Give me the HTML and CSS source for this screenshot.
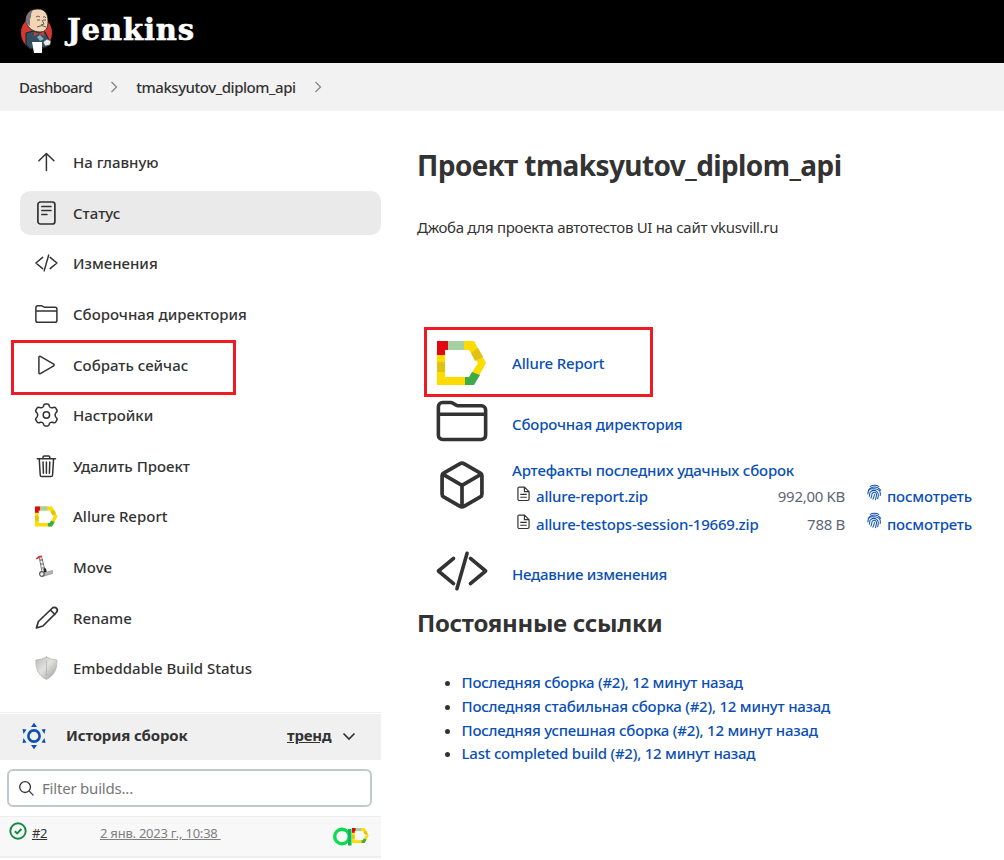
FILE: index.html
```html
<!DOCTYPE html>
<html lang="ru">
<head>
<meta charset="utf-8">
<title>tmaksyutov_diplom_api [Jenkins]</title>
<link rel="stylesheet" href="styles.css">
</head>
<body>
<svg class="defs" width="0" height="0">
  <defs>
    <linearGradient id="steel" x1="0" x2="1" y1="0" y2="1">
      <stop offset="0" stop-color="#b9bbb8"/><stop offset=".45" stop-color="#e2e3e0"/><stop offset="1" stop-color="#979995"/>
    </linearGradient>
    <symbol id="folder" viewBox="0 0 512 512"><path d="M440 432H72a40 40 0 01-40-40V120a40 40 0 0140-40h75.890a40 40 0 0122.190 6.720l27.840 18.560a40 40 0 0022.190 6.720H440a40 40 0 0140 40v240a40 40 0 01-40 40zM32 192h448"/></symbol>
    <symbol id="code" viewBox="0 0 512 512"><path d="M176 376 32 256l144-120M336 376l144-120-144-120M304 88l-96 336"/></symbol>
    <symbol id="allure" viewBox="0 0 50 44">
      <path fill="#ffdc00" d="M0 0H37L49 22 37 44H0ZM8 9V36H32L41 22 32 9Z" fill-rule="evenodd"/>
      <path fill="#e30613" d="M0 0H11V9H8V14H0Z"/><path fill="#a5d1a2" d="M11 0H27V9H11Z"/>
      <path fill="#e0c212" d="M0 21H8V31H0ZM41 7 46 16 38 20 34 12Z"/>
      <path fill="#3dab49" d="M28 36H32L35 31 43 34 37 44H28Z"/>
    </symbol>
    <symbol id="doc" viewBox="0 0 14 17"><path d="M1 2.500Q1 1 2.500 1H8L13 6V14Q13 15.500 11.500 15.500H2.500Q1 15.500 1 14ZM8 1V6H13M3.500 9H10.500M3.500 12H10.500"/></symbol>
    <symbol id="finger" viewBox="0 0 16 18"><path d="M3 2.200Q8-.8 13 2.200M1.200 6.500Q4 2.700 8 2.700T14.800 6.500M1 10.500C.5 3 7 4.500 8 4.500 13 4.700 15 7.500 14 12M2.300 13C3.500 10 2 9 4 7.600 8 4.300 13 7.500 11.900 12.500L11.300 15.500M4 14.800C6 11.500 4.500 11 5.600 9.300 8 6.800 10.700 9 10 12L9 16.500M6 16C8 13 7.500 12 8 10.300"/></symbol>
  </defs>
</svg>

<header class="header">
  <svg class="butler" viewBox="0 0 34 46">
    <ellipse cx="16.500" cy="25" rx="15.500" ry="16.500" fill="#d33833"/>
    <path d="M6 25 13 23 25 24 29 32 27 39 10 41 6 36Z" fill="#335061" stroke="#17212a"/>
    <path d="M6 14C5 5 11 1 18 1 25 1 28 6 28 13 28 20 26 24 20 24 13 24 8 20 6 14Z" fill="#f0d6b7" stroke="#222" stroke-width=".8"/>
    <path d="M6 15C5 8 8 4 13 2 10 6 12 9 10 11L10 18Z" fill="#7b757b"/>
    <path d="M16 9Q18 7 20 9M23 9Q25 8 26 10M17 12h3M23 12h3M22 12l2 4-3 1M17 19q5-3 9 0" fill="none" stroke="#493728" stroke-width=".8"/>
    <path d="M14 24 19 26 24 23V28L19 26 14 28Z" fill="#d33833"/>
    <path d="M17 29 20 27 24 31 20 33Z" fill="#81b0c4"/>
    <path d="M12 34H22V45H14Z" fill="#fff"/>
    <path d="M23 34 27 31 31 33 30 37 25 38Z" fill="#e9ebeb" stroke="#444" stroke-width=".7"/>
  </svg>
  <span class="brand">Jenkins</span>
</header>

<nav class="crumbs">
  <a class="crumb-root">Dashboard</a>
  <svg class="chev" viewBox="0 0 8 12"><path d="M1.500 1 6.500 6 1.500 11"/></svg>
  <a class="crumb-job">tmaksyutov_diplom_api</a>
  <svg class="chev" viewBox="0 0 8 12"><path d="M1.500 1 6.500 6 1.500 11"/></svg>
</nav>

<div class="page">
  <aside class="side">
    <div class="tasks">
      <a class="task"><svg class="ic" viewBox="0 0 512 512"><path d="M96 230 256 76l160 154M256 80v356"/></svg><span>На главную</span></a>
      <a class="task active"><svg class="ic" viewBox="0 0 24 24"><g class="px"><rect x="3.500" y="1" width="17" height="22" rx="2.500"/><path d="M7.500 5.500h9M7.500 9.500h9M7.500 13.500h5"/></g></svg><span>Статус</span></a>
      <a class="task"><svg class="ic"><use href="#code"/></svg><span>Изменения</span></a>
      <a class="task"><svg class="ic"><use href="#folder"/></svg><span>Сборочная директория</span></a>
      <a class="task marked"><svg class="ic" viewBox="0 0 512 512"><path d="M96 90v332c0 18 17 27 31 19l285-168c12-7 12-27 0-34L127 71c-14-8-31 1-31 19z"/></svg><span>Собрать сейчас</span></a>
      <a class="task"><svg class="ic" viewBox="0 0 24 24"><path class="thin" d="M9 3.500Q9.300 1 11 1H13Q14.700 1 15 3.500 16 5.300 18 4.700 20.500 3.500 21.400 5.200L22.500 7Q23.300 8.600 21.300 10 20 12 21.300 14 23.300 15.400 22.500 17L21.400 18.800Q20.500 20.500 18 19.300 16 18.700 15 20.500 14.700 23 13 23H11Q9.300 23 9 20.500 8 18.700 6 19.300 3.500 20.500 2.600 18.800L1.500 17Q.7 15.400 2.700 14 4 12 2.700 10 .7 8.600 1.500 7L2.600 5.200Q3.500 3.500 6 4.700 8 5.300 9 3.500Z"/><circle class="thin" cx="12" cy="12" r="3.200"/></svg><span>Настройки</span></a>
      <a class="task"><svg class="ic" viewBox="0 0 512 512"><path d="M104 112l20 336c1 20 14 34 32 34h200c18 0 31-14 32-34l20-336M62 100h388M184 100V64a24 24 0 0124-24h96a24 24 0 0124 24v36M256 170v240M184 170l8 240M328 170l-8 240"/></svg><span>Удалить Проект</span></a>
      <a class="task"><svg class="allure-s"><use href="#allure"/></svg><span>Allure Report</span></a>
      <a class="task"><svg class="ic truck" viewBox="0 0 24 24"><path d="M5 3 8 19M7.500 3 11 17" stroke="#777" stroke-width="1"/><path d="M6 5h2M6.500 9h2M8 13h2" stroke="#555" stroke-width="1"/><path d="M2.500 3.500Q4 1.500 7 1.500" stroke="#c44" stroke-width="1.800"/><path d="M10 18 18 15.500V18.500L10 21Z" fill="#b9b9b2" stroke="#888" stroke-width=".7"/><path d="m9 14 2-1 1.500 3.500-3 1z" fill="#222" stroke="none"/><circle cx="7.500" cy="19" r="2.300" fill="#eee" stroke="#555" stroke-width="1.200"/></svg><span>Move</span></a>
      <a class="task"><svg class="ic" viewBox="0 0 24 24"><path class="px" d="M2 22 4 15.500 17.500 2.500C19 1 21 1 22.200 2.300S23 5.500 21.500 7L8.500 20ZM16 4 20.500 8.500"/></svg><span>Rename</span></a>
      <a class="task"><svg class="ic" viewBox="0 0 24 24"><path d="M12 1Q17 4 22.500 4C23 14 19 20 12 23.500 5 20 1 14 1.500 4Q7 4 12 1Z" fill="url(#steel)" stroke="#b5b7b3" stroke-width=".8"/><path d="M12 5V19" stroke="#aaa" stroke-width=".7" stroke-dasharray="2 1"/></svg><span>Embeddable Build Status</span></a>
    </div>

    <section class="history">
      <div class="history-head">
        <svg class="sun" viewBox="0 0 24 28"><circle cx="12" cy="14" r="5.600" fill="none" stroke="#0b4fb3" stroke-width="2.600"/><path fill="#0b4fb3" d="M12 .7 15 5H9ZM12 27.300 15 23H9ZM.5 7 4.500 7.500 1.500 12ZM23.500 7 19.500 7.500 22.500 12ZM.5 21 4.500 20.500 1.500 16ZM23.500 21 19.500 20.500 22.500 16Z"/></svg>
        <strong class="history-title">История сборок</strong>
        <a class="trend">тренд</a>
        <svg class="down" viewBox="0 0 14 9"><path d="M1.500 1.500 7 7 12.500 1.500"/></svg>
      </div>
      <div class="search">
        <svg class="lens" viewBox="0 0 18 18"><circle cx="7.500" cy="7.500" r="5.700"/><path d="m11.800 11.800 4.500 4.500"/></svg>
        <span>Filter builds...</span>
      </div>
      <div class="build">
        <svg class="ok" viewBox="0 0 18 18"><circle cx="9" cy="9" r="7.700"/><path d="m5.800 9.200 2.400 2.300 4.200-4.500"/></svg>
        <a class="num">#2</a>
        <span class="when"><a class="date">2 янв. 2023 г., 10:38&nbsp;</a></span>
        <svg class="ops" viewBox="0 0 19 19"><circle cx="9" cy="9.500" r="7.300" fill="none" stroke="#0bdc50" stroke-width="3.400"/><path d="M15 2h3.500v16.500H15z" fill="#10b957"/></svg>
        <svg class="allure-xs"><use href="#allure"/></svg>
      </div>
    </section>
  </aside>

  <main class="main">
    <h1>Проект tmaksyutov_diplom_api</h1>
    <p class="desc">Джоба для проекта автотестов UI на сайт vkusvill.ru</p>

    <div class="links">
      <div class="row boxed"><svg class="allure-l"><use href="#allure"/></svg><a>Allure Report</a></div>
      <div class="row row-folder"><svg class="big"><use href="#folder"/></svg><a>Сборочная директория</a></div>
      <div class="row row-art">
        <svg class="big cube" viewBox="0 0 512 512"><path d="M460 350V162a32 32 0 00-16-28L280 39a48 48 0 00-48 0L68 134a32 32 0 00-16 28v188a32 32 0 0016 28l164 95a48 48 0 0048 0l164-95a32 32 0 0016-28zM58 144l198 116 198-116M256 480V260"/></svg>
        <div class="art">
          <a class="art-title">Артефакты последних удачных сборок</a>
          <div class="file"><svg class="doc"><use href="#doc"/></svg><a class="fname">allure-report.zip</a><span class="size">992,00 KB</span><svg class="finger"><use href="#finger"/></svg><a class="view">посмотреть</a></div>
          <div class="file"><svg class="doc"><use href="#doc"/></svg><a class="fname">allure-testops-session-19669.zip</a><span class="size">788 B</span><svg class="finger"><use href="#finger"/></svg><a class="view">посмотреть</a></div>
        </div>
      </div>
      <div class="row row-code"><svg class="big"><use href="#code"/></svg><a>Недавние изменения</a></div>
    </div>

    <h2>Постоянные ссылки</h2>
    <ul class="perma">
      <li><a>Последняя сборка (#2), 12 минут назад</a></li>
      <li><a>Последняя стабильная сборка (#2), 12 минут назад</a></li>
      <li><a>Последняя успешная сборка (#2), 12 минут назад</a></li>
      <li><a>Last completed build (#2), 12 минут назад</a></li>
    </ul>
  </main>
</div>
</body>
</html>
```
FILE: styles.css
```css
*, *::after { box-sizing: border-box; }
body { margin: 0; height: 860px; overflow: hidden; background: #fff; color: #333; font: 500 15px/22px "Noto Sans", "Open Sans", sans-serif; }
svg { display: block; flex: none; overflow: visible; }
.defs { position: absolute; }
.header { height: 63px; background: #000; display: flex; align-items: flex-start; padding: 8px 0 0 20px; }
.butler { width: 34px; height: 46px; }
.brand { margin-left: 13px; color: #fff; font: 700 29px/44px "DejaVu Serif", serif; letter-spacing: .9px; -webkit-text-stroke: .6px #fff; }
.crumbs { height: 48px; background: #f2f2f2; display: flex; align-items: center; padding-left: 19px; }
.crumb-root { letter-spacing: -.6px; }
.crumb-job { letter-spacing: -.46px; }
.chev { width: 8px; height: 12px; margin: 0 18px; fill: none; stroke: #888; stroke-width: 1.3; }

.page { display: flex; }
.side { width: 381px; flex: none; }
.tasks { padding: 29.200px 0 0 20px; height: 601px; display: flex; flex-direction: column; gap: 6.620px; }
.task { height: 44px; flex: none; display: flex; align-items: center; gap: 15px; padding-left: 14px; border-radius: 10px; position: relative; }
.active { background: #eaeaea; margin-top: .2px; margin-bottom: -.2px; }
.ic { width: 24px; height: 24px; fill: none; stroke: #333; stroke-width: 32; stroke-linecap: round; stroke-linejoin: round; }
.task .ic { padding-left: 0; transform: translateX(.4px); }
.ic .px { stroke-width: 1.700; }
.ic .thin { stroke-width: 1.500; }
.allure-s { width: 23px; height: 21px; margin: 0 0 0 1px; }
.marked::after { content: ""; position: absolute; left: -9px; top: -2.600px; width: 225px; height: 55px; border: 3px solid #ed1c24; }

.history { border-top: 1px solid #eee; padding-top: 1px; }
.history-head { height: 46px; background: #f0f0f0; display: flex; align-items: center; padding: 0 0 4px 22px; }
.sun { width: 24px; height: 28px; margin-top: 2px; }
.history-title { margin-left: 20px; width: 221px; font-weight: 700; letter-spacing: -.15px; }
.trend { font-weight: 700; text-decoration: underline; width: 44px; letter-spacing: -.2px; }
.down { width: 14px; height: 9px; margin: 2px 0 0 11px; fill: none; stroke: #333; stroke-width: 1.700; }
.search { margin: 9px 9px 9px 7px; height: 38px; border: 2px solid #c0cacf; border-radius: 6px; display: flex; align-items: center; gap: 7px; padding-left: 9px; color: #777; font-weight: 400; letter-spacing: -.2px; }
.lens { width: 17px; height: 17px; fill: none; stroke: #333; stroke-width: 1.400; }
.build { height: 42px; background: #f8f8f8; border-top: 1px solid #eee; border-bottom: 2px solid #eee; display: flex; align-items: center; padding: 0 0 7px 9px; font-size: 13px; font-weight: 400; }
.build a { text-decoration: underline; }
.ok { width: 18px; height: 18px; margin-top: -5px; fill: none; stroke: #138a42; stroke-width: 1.900; }
.num { margin-left: 5px; width: 68px; letter-spacing: -.3px; }
.when { width: 233px; }
.date { color: #808080; letter-spacing: -.23px; }
.ops { width: 19px; height: 19px; margin-top: 6px; }
.allure-xs { width: 17px; height: 15px; margin-top: 5px; }

.main { padding-left: 36px; }
h1 { margin: 36px 0 0; font-size: 28px; line-height: 36px; font-weight: 700; letter-spacing: -.6px; }
.desc { margin: 33px 0 0; font-weight: 400; line-height: 22px; letter-spacing: -.3px; }
.main a { color: #0b4fb3; letter-spacing: -.17px; }
.links { padding-top: 89px; }
.row { display: flex; align-items: center; padding-left: 20px; }
.boxed { margin-left: 7px; width: 229px; height: 70px; border: 3px solid #ed1c24; padding: 2px 0 0 10px; }
.allure-l { width: 50px; height: 44px; margin-right: 25px; }
.big { width: 54px; height: 54px; margin: 0 23px 0 -2px; fill: none; stroke: #333; stroke-width: 34; stroke-linecap: round; stroke-linejoin: round; }
.row-folder { height: 55px; padding-bottom: 2px; }
.row-folder .big { margin-top: -6px; }
.row-art { height: 95px; align-items: flex-start; padding-top: 7px; }
.cube { width: 50px; height: 50px; margin: 1px 25px 0 0; stroke-width: 38; }
.art-title { display: block; margin-bottom: 1px; }
.file { display: flex; height: 28px; align-items: center; padding-left: 5px; }
.doc { width: 13px; height: 16px; margin: -5px 6px 0 0; fill: none; stroke: #333; stroke-width: 1.300; }
.main .fname { width: 224px; white-space: nowrap; letter-spacing: -.2px; }
.size { width: 85px; text-align: right; color: #606575; font-weight: 400; letter-spacing: -.3px; }
.finger { width: 15px; height: 18px; margin: -6px 5px 0 22px; fill: none; stroke: #0b4fb3; stroke-width: 1.100; }
.row-code { height: 54px; }
.row-code .big { margin-top: -6px; }
.row-code a { letter-spacing: -.27px; }
h2 { margin: 4px 0 0; font-size: 24px; line-height: 36px; font-weight: 700; letter-spacing: -.3px; }
.perma { margin: 30px 0 0; padding: 0 0 0 44.500px; line-height: 23.800px; }
.main .perma a { letter-spacing: -.23px; }
```
